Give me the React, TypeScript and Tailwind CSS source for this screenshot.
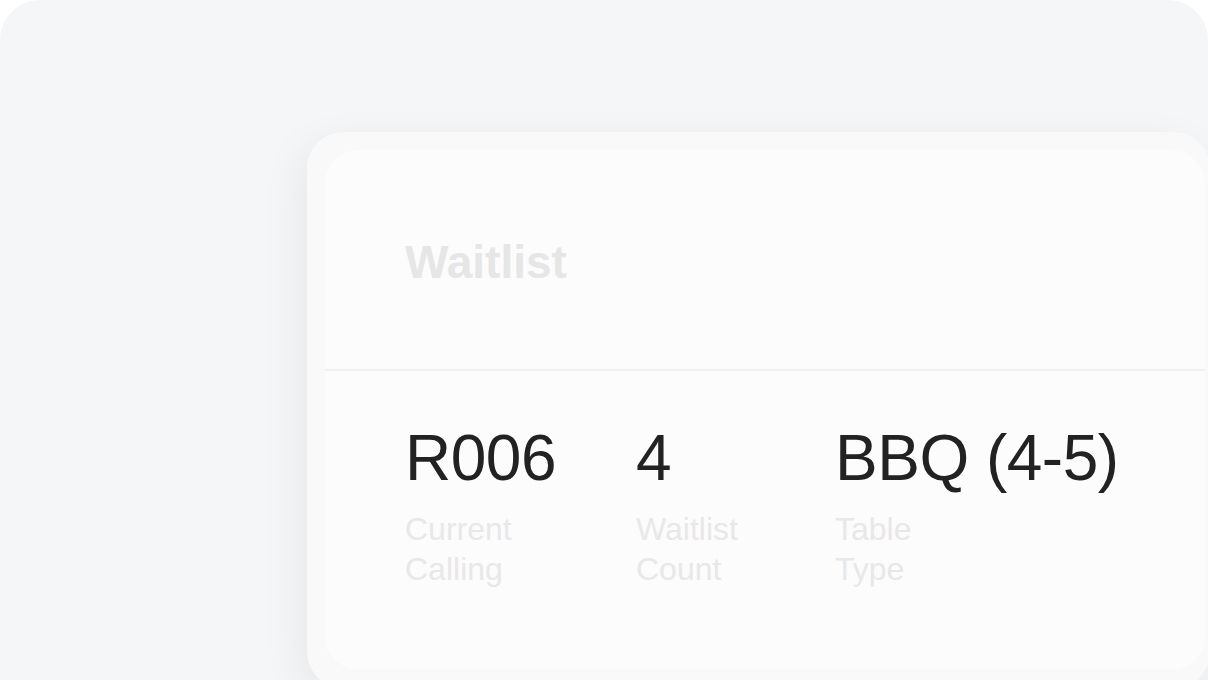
export default function App() {
  const stats = [
    { value: "R006", label: "Current Calling", width: "w-[231px]" },
    { value: "4", label: "Waitlist Count", width: "w-[199px]" },
    { value: "BBQ (4-5)", label: "Table Type", width: "flex-1" },
  ]

  return (
    <div
      className="w-[1208px] h-[680px] overflow-hidden bg-white"
      style={{ fontFamily: '"Liberation Sans", Arial, sans-serif' }}
    >
      <div className="h-full rounded-t-[40px] bg-[#f5f6f8] pl-[307px] pt-[132px]">
        {/* Outer card */}
        <div className="w-[903px] h-[556px] shrink-0 rounded-[36px] bg-[#f9f9f9] pl-[18px] pr-[5px] pt-[18px] shadow-[-8px_10px_40px_rgba(0,0,0,0.06)]">
          {/* Inner card */}
          <div className="h-[520px] rounded-[34px] bg-[#fcfcfc] flex flex-col">
            <div className="h-[219px] flex items-center pl-[80px] pt-[4px]">
              <h2 className="text-[46px] leading-none font-bold text-[#e6e6e6]">Waitlist</h2>
            </div>
            <div className="h-[2px] bg-[#f0f0f2]" />
            <div className="flex pl-[80px] pt-[55px]">
              {stats.map((s) => (
                <div key={s.label} className={s.width}>
                  <div className="text-[64px] leading-none tracking-[-0.5px] text-[#222222]">{s.value}</div>
                  <div className="mt-[19px] w-[120px] text-[32px] leading-[40px] text-[#e8e8e8]">{s.label}</div>
                </div>
              ))}
            </div>
          </div>
        </div>
      </div>
    </div>
  )
}
